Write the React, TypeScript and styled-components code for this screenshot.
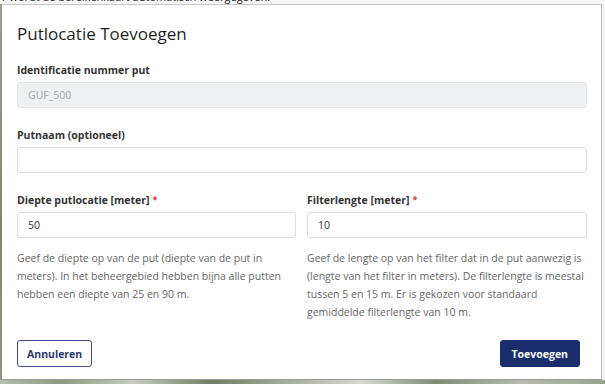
import React from "react";
import styled, { createGlobalStyle } from "styled-components";

const GlobalStyle = createGlobalStyle`
  html, body { margin: 0; padding: 0; }
  body {
    background: #e6e8e3;
    font-family: "Segoe UI", "Open Sans", "Noto Sans", Arial, sans-serif;
    color: #333;
  }
  * { box-sizing: border-box; }
`;

const Page = styled.div`
  width: 605px;
  height: 384px;
  display: flex;
  flex-direction: column;
  overflow: hidden;
  background: #e6e8e3;
`;

const TopStrip = styled.div`
  height: 4px;
  overflow: hidden;
  background: #f7f7f7;
  padding-left: 2px;
`;

const BehindText = styled.div`
  margin-top: -10px;
  font-size: 11px;
  line-height: 14px;
  color: #222;
  white-space: nowrap;
`;

const Middle = styled.div`
  flex: 1;
  display: flex;
`;

const LeftEdge = styled.div`
  width: 2px;
  background: linear-gradient(#9aa08f, #7d8a6e 60%, #8e9680);
`;

const RightEdge = styled.div`
  width: 4px;
  background: #f2f2f2;
  border-left: 1px solid #b5b5b5;
`;

const BottomStrip = styled.div`
  height: 4px;
  background: linear-gradient(
    90deg,
    #b9bdb2 0%,
    #8d9a7e 10%,
    #c9ccc2 22%,
    #6f7d62 35%,
    #aab0a0 48%,
    #d6d8d0 60%,
    #7f8b74 72%,
    #b8bcb0 86%,
    #9aa38e 100%
  );
`;

const Modal = styled.div`
  flex: 1;
  background: #fff;
  border-top: 1px solid #c8c8c8;
  border-bottom: 1px solid #9a9a9a;
  display: flex;
  flex-direction: column;
  padding: 18px 14px 12px 15px;
`;

const Title = styled.h1`
  margin: 0;
  font-size: 17px;
  line-height: 22px;
  font-weight: 400;
  color: #1f1f1f;
`;

const Body = styled.div`
  margin-top: 17px;
  display: flex;
  flex-direction: column;
`;

const Field = styled.div<{ $gap?: number }>`
  display: flex;
  flex-direction: column;
  margin-bottom: ${(p) => p.$gap ?? 0}px;
`;

const Label = styled.label`
  font-size: 10.5px;
  line-height: 16px;
  font-weight: 700;
  color: #333;
  margin-bottom: 4px;
`;

const Required = styled.span`
  color: #d9363e;
  margin-left: 3px;
  font-size: 9px;
  vertical-align: 1px;
`;

const Input = styled.div<{ $disabled?: boolean }>`
  height: 26px;
  border: 1px solid ${(p) => (p.$disabled ? "#e2e4e7" : "#dcdcdc")};
  background: ${(p) => (p.$disabled ? "#eff0f2" : "#fff")};
  border-radius: 3px;
  padding: 0 10px;
  display: flex;
  align-items: center;
  font-size: 10.5px;
  color: ${(p) => (p.$disabled ? "#a3a6aa" : "#333")};
`;

const Columns = styled.div`
  display: grid;
  grid-template-columns: 279px 280px;
  column-gap: 11px;
`;

const Help = styled.p`
  margin: 11px 0 0;
  font-size: 10.5px;
  line-height: 18px;
  color: #666;
`;

const Footer = styled.div`
  margin-top: auto;
  display: flex;
  justify-content: space-between;
  padding-right: 7px;
`;

const Button = styled.button<{ $primary?: boolean }>`
  height: 27px;
  padding: 0 ${(p) => (p.$primary ? 11 : 9)}px;
  border-radius: 3px;
  font-family: inherit;
  font-size: 10.5px;
  font-weight: 700;
  cursor: pointer;
  border: 1px solid ${(p) => (p.$primary ? "#1a2d6d" : "#3f4f8c")};
  background: ${(p) => (p.$primary ? "#1a2d6d" : "#fff")};
  color: ${(p) => (p.$primary ? "#fff" : "#2b3a74")};
`;

export default function App() {
  return (
    <>
      <GlobalStyle />
      <Page>
        <TopStrip>
          <BehindText>r wordt de bereikenkaart automatisch weergegeven.</BehindText>
        </TopStrip>
        <Middle>
          <LeftEdge />
          <Modal>
            <Title>Putlocatie Toevoegen</Title>
            <Body>
              <Field $gap={19}>
                <Label>Identificatie nummer put</Label>
                <Input $disabled>GUF_500</Input>
              </Field>
              <Field $gap={19}>
                <Label>Putnaam (optioneel)</Label>
                <Input />
              </Field>
              <Columns>
                <Field>
                  <Label>
                    Diepte putlocatie [meter]<Required>*</Required>
                  </Label>
                  <Input>50</Input>
                  <Help>
                    Geef de diepte op van de put (diepte van de put in meters). In het
                    beheergebied hebben bijna alle putten hebben een diepte van 25 en 90 m.
                  </Help>
                </Field>
                <Field>
                  <Label>
                    Filterlengte [meter]<Required>*</Required>
                  </Label>
                  <Input>10</Input>
                  <Help>
                    Geef de lengte op van het filter dat in de put aanwezig is (lengte van
                    het filter in meters). De filterlengte is meestal tussen 5 en 15 m. Er
                    is gekozen voor standaard gemiddelde filterlengte van 10 m.
                  </Help>
                </Field>
              </Columns>
            </Body>
            <Footer>
              <Button>Annuleren</Button>
              <Button $primary>Toevoegen</Button>
            </Footer>
          </Modal>
          <RightEdge />
        </Middle>
        <BottomStrip />
      </Page>
    </>
  );
}
